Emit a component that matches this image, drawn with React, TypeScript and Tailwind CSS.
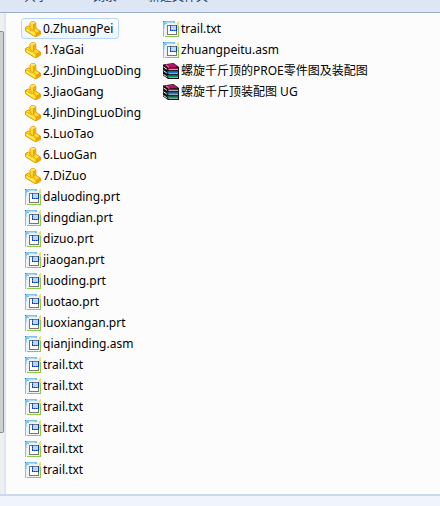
type FileKind = 'part' | 'doc' | 'archive';

interface FileEntry {
  name: string;
  kind: FileKind;
  selected?: boolean;
}

const columns: FileEntry[][] = [
  [
    { name: '0.ZhuangPei', kind: 'part', selected: true },
    { name: '1.YaGai', kind: 'part' },
    { name: '2.JinDingLuoDing', kind: 'part' },
    { name: '3.JiaoGang', kind: 'part' },
    { name: '4.JinDingLuoDing', kind: 'part' },
    { name: '5.LuoTao', kind: 'part' },
    { name: '6.LuoGan', kind: 'part' },
    { name: '7.DiZuo', kind: 'part' },
    { name: 'daluoding.prt', kind: 'doc' },
    { name: 'dingdian.prt', kind: 'doc' },
    { name: 'dizuo.prt', kind: 'doc' },
    { name: 'jiaogan.prt', kind: 'doc' },
    { name: 'luoding.prt', kind: 'doc' },
    { name: 'luotao.prt', kind: 'doc' },
    { name: 'luoxiangan.prt', kind: 'doc' },
    { name: 'qianjinding.asm', kind: 'doc' },
    { name: 'trail.txt', kind: 'doc' },
    { name: 'trail.txt', kind: 'doc' },
    { name: 'trail.txt', kind: 'doc' },
    { name: 'trail.txt', kind: 'doc' },
    { name: 'trail.txt', kind: 'doc' },
    { name: 'trail.txt', kind: 'doc' },
  ],
  [
    { name: 'trail.txt', kind: 'doc' },
    { name: 'zhuangpeitu.asm', kind: 'doc' },
    { name: '螺旋千斤顶的PROE零件图及装配图', kind: 'archive' },
    { name: '螺旋千斤顶装配图 UG', kind: 'archive' },
  ],
];

const PartIcon = () => (
  <svg width="16" height="16" viewBox="0 0 16 16" className="shrink-0" strokeLinejoin="round" aria-hidden="true">
    <path d="M.5 6.5 3.5 5l1.5.6V2.2L6.5.6h3l1.3 1.2v5.4l4.7 3v3l-4 2.3H9.8L.5 9.8z" fill="#ffdc26" stroke="#e39a0c" />
    <path d="M8.8 2.6l2-1v5.8l-2 1.4z" fill="#f3a712" />
    <path d="M5.2 2.2 6.7.8h2.8l1 1-1.8 1z" fill="#ffe97a" />
    <path d="M11.2 12.4l4-2.2v3l-4 2.2z" fill="#f4a300" />
    <path d="M1 6.8l4 2.4h3.6l2.6 3.2v2.8M8.6 3v6.2M11.2 12.4l4-2.2M5 5.4v2l1.6.8" fill="none" stroke="#dd920c" strokeWidth=".8" />
    <path d="M1.4 8.2l8.4 5.2" stroke="#fff45c" strokeWidth="1.2" />
  </svg>
);

const DocIcon = () => (
  <svg width="16" height="16" viewBox="0 0 16 16" className="shrink-0" shapeRendering="crispEdges" aria-hidden="true">
    <path d="M1 1h14v14H1z" fill="#f0f1f5" />
    <path d="M0 0h12v2H4v1H2v4H1v9H0z" fill="#7cc4f0" />
    <path d="M3 1h7v1H3zM1 4h1v3H1z" fill="#a9daf6" />
    <path d="M0 0h1v1H0z" fill="#2d6f9c" />
    <path d="M15 0h1v5h-1v4h-1V1h1z" fill="#e6e66e" />
    <path d="M15 5h1v11H2v-1h13z" fill="#8dcb45" />
    <path d="M4 4h10v10H4z" fill="#777" />
    <path d="M5 5h8v8H5z" fill="#fdfdfd" />
    <path d="M8 5h5v4H8z" fill="#b9d6fb" />
    <path d="M7 4h1v6H7zM7 9h6v1H7z" fill="#4a70c0" />
    <path d="M7 4h1v1H7zM7 6h1v1H7zM7 8h1v2H7zM9 9h1v1H9zM11 9h1v1h-1zM13 4h1v6h-1z" fill="#0f3fa8" />
  </svg>
);

const ArchiveIcon = () => (
  <svg width="16" height="16" viewBox="0 0 16 16" className="shrink-0" aria-hidden="true">
    <path d="M0 1.4 10.5 0 16 4v12H5L0 12.6z" fill="#16121a" />
    <path d="M1.2 1.7 10.3.6l4.4 3.2-9.2.6z" fill="#b8126c" />
    <path d="M5.2 4.9H15v1.3H5.2z" fill="#9c1058" />
    <path d="M5.6 6.2H15v.9H5.6z" fill="#e3c9d6" />
    <path d="M4.6 8.3H15v2H4.6z" fill="#1b7fc4" />
    <path d="M5.6 10.3H15v.8H5.6z" fill="#bfdcec" />
    <path d="M4.6 12.3H15v2H4.6z" fill="#0f9468" />
    <path d="M5.6 14.3H15v.7H5.6z" fill="#b9dfd0" />
    <path d="M.6 4l3.2 2.2M.6 7.8 3.8 10M.6 11.6l3.2 2.2" stroke="#f4f2f5" />
    <path d="M3 1.8l3 2.6" stroke="#f1cf62" strokeWidth=".8" />
  </svg>
);

const icons = {
  part: PartIcon,
  doc: DocIcon,
  archive: ArchiveIcon,
};

const FileItem = ({ file }: { file: FileEntry }) => {
  const Icon = icons[file.kind];
  return (
    <li className="flex">
      <button
        type="button"
        className={`flex h-[21px] items-center gap-0.5 rounded-[3px] border pl-[3px] pr-[5px] whitespace-nowrap ${
          file.selected ? 'border-[#b8d6fb] bg-linear-to-b from-[#fcfdff] to-[#edf5ff]' : 'border-transparent'
        }`}
      >
        <Icon />
        <span>{file.name}</span>
      </button>
    </li>
  );
};

export default function App() {
  return (
    <div className="flex min-h-screen flex-col bg-[#f0f4fc] font-['Noto_Sans','Noto_Sans_CJK_SC',sans-serif] text-[12px] leading-4 text-black">
      {/* Only the lower edge of the toolbar is visible */}
      <header className="flex h-[13px] items-end gap-[31px] overflow-hidden border-b border-[#9bafca] bg-[#dce6f4] pb-[7px] pl-6 text-[#1e395b]">
        <button type="button" className="shrink-0 pr-3.5">
          共享
        </button>
        <button type="button" className="shrink-0">
          刻录
        </button>
        <button type="button" className="shrink-0">
          新建文件夹
        </button>
      </header>

      <main className="flex border-b-2 border-[#c9d9e9] bg-[#fcfcfc]">
        <div className="flex w-1 shrink-0 flex-col bg-[#f0f0f0] pt-[18px] pb-[61px]">
          <div className="flex-1 rounded-r-xs border-y border-r border-[#8e8e8e] bg-[#cfcfcf]" />
        </div>
        <div className="flex flex-1 border-l-2 border-[#dce7f5] pt-[5px] pb-3.5 pl-[15px]">
          {columns.map((files, i) => (
            <ul key={i} className="w-[138px] shrink-0">
              {files.map((file, j) => (
                <FileItem key={j} file={file} />
              ))}
            </ul>
          ))}
        </div>
      </main>
    </div>
  );
}
